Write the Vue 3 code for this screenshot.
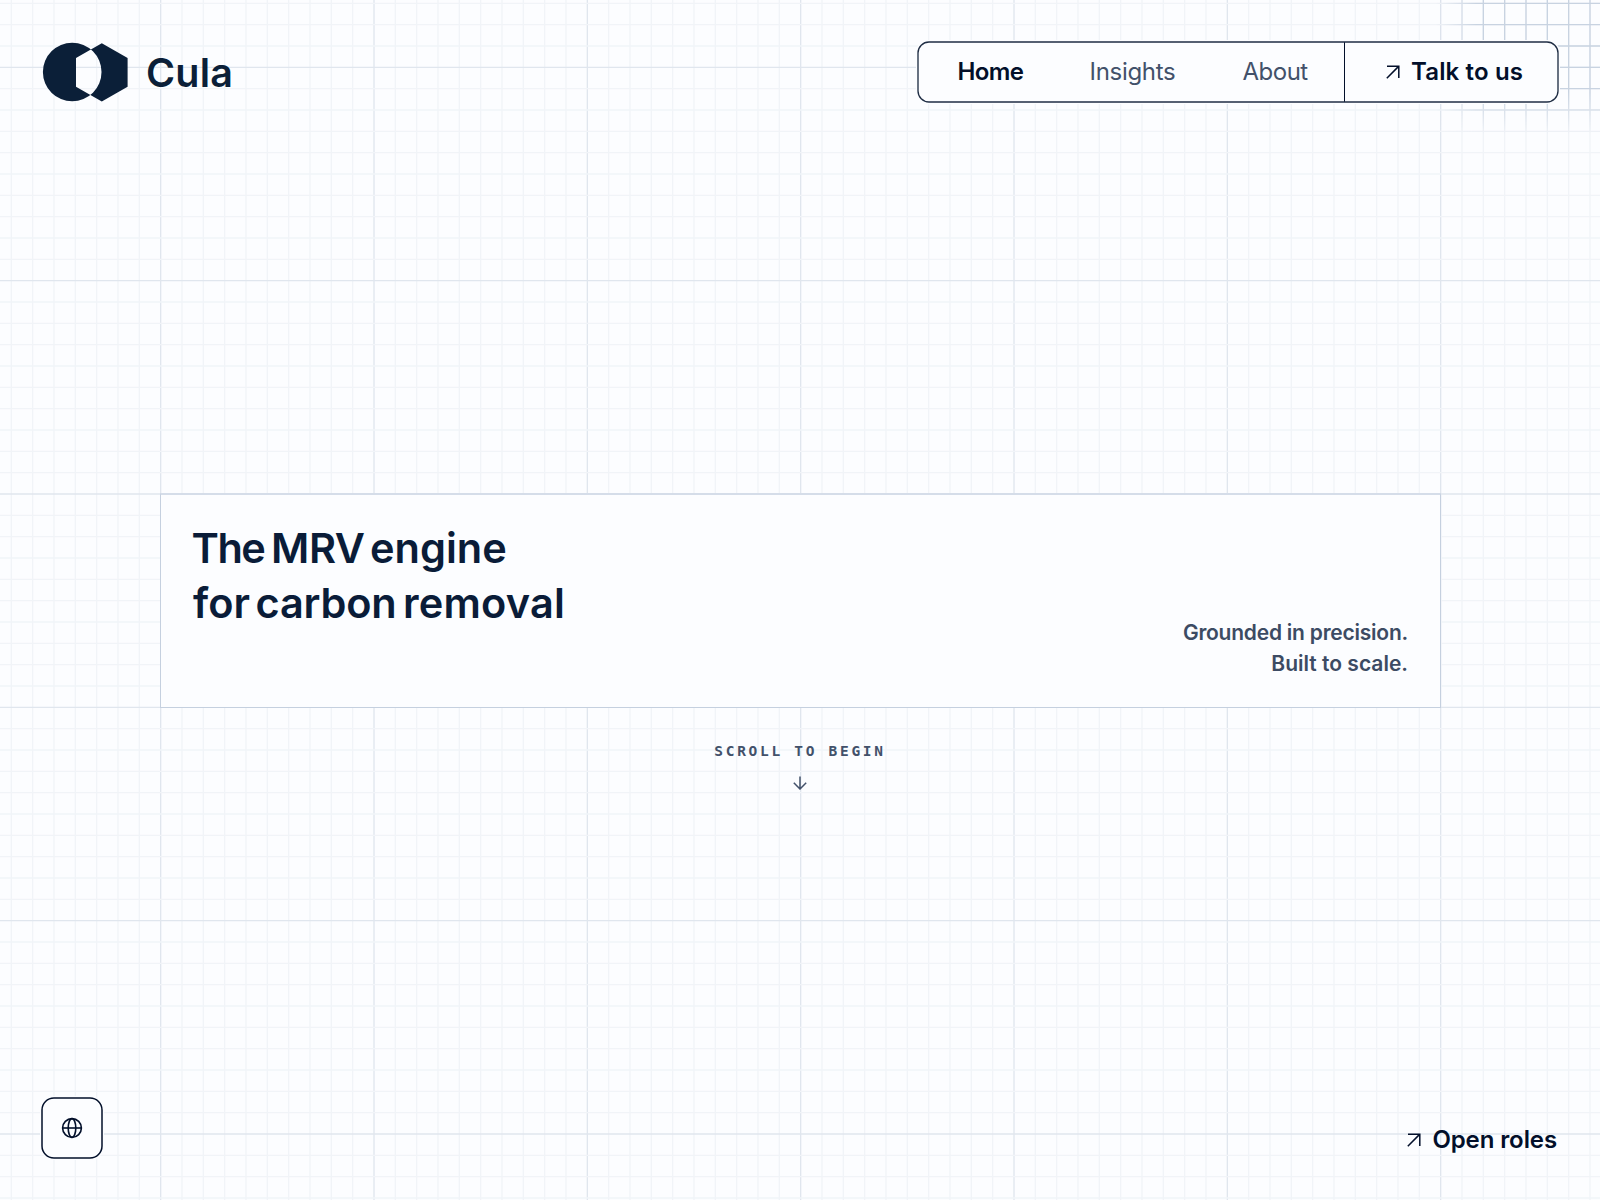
<script setup>
const step = 64 / 3
const range = (from, count) => Array.from({ length: count }, (_, i) => from + i * step)
const vertical = range(11.33, 75).map((p, i) => ({ p, major: i % 10 === 7 }))
const horizontal = range(3.33, 57).map((p, i) => ({ p, major: i % 10 === 3 }))
</script>

<template>
  <div class="page">
    <svg class="grid" width="1600" height="1200" viewBox="0 0 1600 1200" aria-hidden="true">
      <defs>
        <linearGradient id="fadeX" x1="1436" x2="1476" y1="0" y2="0" gradientUnits="userSpaceOnUse">
          <stop offset="0" stop-color="#fff" stop-opacity="0" />
          <stop offset="1" stop-color="#fff" />
        </linearGradient>
        <linearGradient id="fadeY" x1="0" x2="0" y1="92" y2="134" gradientUnits="userSpaceOnUse">
          <stop offset="0" stop-color="#fff" />
          <stop offset="1" stop-color="#fff" stop-opacity="0" />
        </linearGradient>
        <mask id="maskX" maskUnits="userSpaceOnUse" x="0" y="0" width="1600" height="1200">
          <rect x="1436" width="164" height="140" fill="url(#fadeX)" />
        </mask>
        <mask id="maskY" maskUnits="userSpaceOnUse" x="0" y="0" width="1600" height="1200">
          <rect x="1436" width="164" height="140" fill="url(#fadeY)" />
        </mask>
      </defs>
      <g>
        <line v-for="l in vertical" :key="'v' + l.p" :x1="l.p" :x2="l.p" y1="0" y2="1200" :class="{ major: l.major }" />
        <line v-for="l in horizontal" :key="'h' + l.p" :y1="l.p" :y2="l.p" x1="0" x2="1600" :class="{ major: l.major }" />
      </g>
      <g mask="url(#maskX)">
        <g mask="url(#maskY)" class="accent">
          <line v-for="l in vertical" :key="'av' + l.p" :x1="l.p" :x2="l.p" y1="0" y2="140" />
          <line v-for="l in horizontal.slice(0, 7)" :key="'ah' + l.p" :y1="l.p" :y2="l.p" x1="1436" x2="1600" />
        </g>
      </g>
    </svg>

    <header class="top">
      <a class="brand">
        <svg width="86" height="60" viewBox="0 0 86 60">
          <path fill="#0b1f38" fill-rule="evenodd" d="M30.2 .7a29.3 29.3 0 1 0 0 58.6a29.3 29.3 0 1 0 0-58.6zM59.8 1.2L85.6 16v28.8L59.8 59.4L34 44.8V16z" />
        </svg>
        <span class="name">Cula</span>
      </a>
      <nav class="nav">
        <svg class="frame" width="642" height="62" viewBox="0 0 642 62" aria-hidden="true">
          <rect x="1" y="1" width="640" height="60" rx="11" />
        </svg>
        <a class="home">Home</a>
        <a class="insights">Insights</a>
        <a class="about">About</a>
        <a class="talk">
          <svg class="arrow" width="14" height="14" viewBox="0 0 14 14"><path d="M1 1.2H12.8V13M12.6 1.4L.8 13.2" /></svg>
          <span>Talk to us</span>
        </a>
      </nav>
    </header>

    <main class="middle">
      <section class="hero">
        <h1>
          <span class="row"><span class="the">The</span><span class="mrv">MRV</span><span class="engine">engine</span></span>
          <span class="row"><span class="for">for</span><span class="carbon">carbon</span><span class="removal">removal</span></span>
        </h1>
        <p><span class="tight">Grounded in precision.</span><br /><span>Built to scale.</span></p>
      </section>
      <div class="scroll">
        <span>SCROLL TO BEGIN</span>
        <svg width="14" height="14" viewBox="0 0 14 14"><path d="M7 .6V13M.8 6.8L7 13L13.2 6.8" /></svg>
      </div>
    </main>

    <footer class="bottom">
      <button class="globe" aria-label="Language">
        <svg class="frame" width="62" height="62" viewBox="0 0 62 62" aria-hidden="true">
          <rect x="1" y="1" width="60" height="60" rx="12" />
        </svg>
        <svg class="world" width="22" height="22" viewBox="0 0 22 22">
          <circle cx="11" cy="11" r="9.4" />
          <ellipse cx="11" cy="11" rx="3.8" ry="9.4" />
          <path d="M1.6 11H20.4" />
        </svg>
      </button>
      <a class="roles">
        <svg class="arrow" width="14" height="14" viewBox="0 0 14 14"><path d="M1 1.2H12.8V13M12.6 1.4L.8 13.2" /></svg>
        <span>Open roles</span>
      </a>
    </footer>
  </div>
</template>

<style>
body {
  margin: 0;
  background: #fcfdff;
}
</style>

<style scoped>
.page {
  position: relative;
  display: flex;
  flex-direction: column;
  box-sizing: border-box;
  width: 1600px;
  height: 1200px;
  overflow: hidden;
  background: #fcfdff;
  font-family: Inter, "Liberation Sans", sans-serif;
  color: #020f2a;
}
.page * {
  box-sizing: border-box;
}
.grid {
  position: absolute;
  inset: 0;
}
.grid line {
  stroke: #f1f4f8;
  stroke-width: 1.33;
}
.grid line.major {
  stroke: #e0e6ee;
}
.grid .accent line {
  stroke: #c8d3e1;
}
.top,
.middle,
.bottom {
  position: relative;
}
.top {
  display: flex;
  justify-content: space-between;
  align-items: flex-start;
  height: 493px;
  padding: 41px 41px 0 42px;
  flex: none;
}
.brand {
  display: flex;
  align-items: flex-start;
  height: 60px;
  margin-top: 1px;
  color: #0b1f38;
}
.name {
  margin-left: 18px;
  padding-top: 1px;
  font-size: 39.5px;
  line-height: 60px;
  font-weight: 600;
  letter-spacing: 0.2px;
  white-space: nowrap;
}
.nav {
  position: relative;
  display: flex;
  width: 642px;
  height: 62px;
  padding: 1px 2px;
  border-radius: 12px;
  background: #fcfdff;
  box-shadow: 0 0 0 1px #fcfdff;
  font-size: 24px;
  line-height: 60px;
  white-space: nowrap;
}
.frame {
  position: absolute;
  inset: 0;
  fill: none;
  stroke: #1f2d44;
  stroke-width: 1.33;
}
.nav > a {
  flex: none;
}
.home {
  width: 132px;
  padding-left: 38.5px;
  font-weight: 600;
  letter-spacing: -0.6px;
}
.insights {
  width: 153px;
  padding-left: 38.5px;
  color: #42516a;
  letter-spacing: -0.3px;
}
.about {
  width: 140px;
  padding-left: 38.5px;
  color: #42516a;
  letter-spacing: -0.5px;
}
.talk {
  display: flex;
  align-items: center;
  width: 213px;
  padding-left: 41px;
  border-left: 1px solid #020f2a;
  font-weight: 600;
  letter-spacing: 0.15px;
}
.arrow {
  fill: none;
  stroke: #020f2a;
  stroke-width: 1.5;
}
.talk span,
.roles span {
  margin-left: 11px;
}
.hero {
  display: flex;
  justify-content: space-between;
  width: 1281px;
  height: 215px;
  margin-left: 160px;
  padding: 26px 32px 0 31px;
  border: 1px solid #c5d0df;
  border-top: 2px solid #d5dde9;
  background: #fcfdff;
}
h1 {
  margin: 0;
  font-size: 41.5px;
  line-height: 54.6px;
  font-weight: 600;
  color: #0a1c38;
}
.row {
  display: flex;
  white-space: nowrap;
}
.the {
  width: 79.5px;
  margin-left: -0.5px;
  letter-spacing: -1.5px;
}
.mrv {
  width: 99px;
  letter-spacing: -0.4px;
}
.for {
  width: 62.5px;
  margin-left: 1px;
}
.carbon {
  width: 147.5px;
  letter-spacing: -0.2px;
}
.removal {
  letter-spacing: 0.2px;
}
.hero p {
  margin: 96px 0 0;
  font-size: 21px;
  line-height: 31.3px;
  font-weight: 600;
  text-align: right;
  color: #3c4b63;
  white-space: nowrap;
}
.tight {
  letter-spacing: -0.23px;
}
.scroll {
  display: flex;
  flex-direction: column;
  align-items: center;
  padding-top: 33px;
  color: #42516a;
}
.scroll span {
  font: bold 14.5px/20px "DejaVu Sans Mono", monospace;
  letter-spacing: 2.7px;
}
.scroll svg {
  margin-top: 14.5px;
  fill: none;
  stroke: #42516a;
  stroke-width: 1.5;
}
.bottom {
  display: flex;
  justify-content: space-between;
  align-items: flex-start;
  margin-top: auto;
  height: 103px;
  padding: 0 43px 0 41px;
}
.globe {
  position: relative;
  display: flex;
  align-items: center;
  justify-content: center;
  width: 62px;
  height: 62px;
  padding: 0;
  border: 0;
  border-radius: 13px;
  background: #fcfdff;
  box-shadow: 0 0 0 1px #fcfdff;
}
.globe .frame {
  stroke: #020f2a;
  stroke-width: 1.5;
}
.world {
  fill: none;
  stroke: #020f2a;
  stroke-width: 1.6;
}
.roles {
  display: flex;
  align-items: center;
  margin-top: 27.5px;
  font-size: 24px;
  line-height: 30px;
  font-weight: 600;
  letter-spacing: -0.1px;
  white-space: nowrap;
}
</style>
